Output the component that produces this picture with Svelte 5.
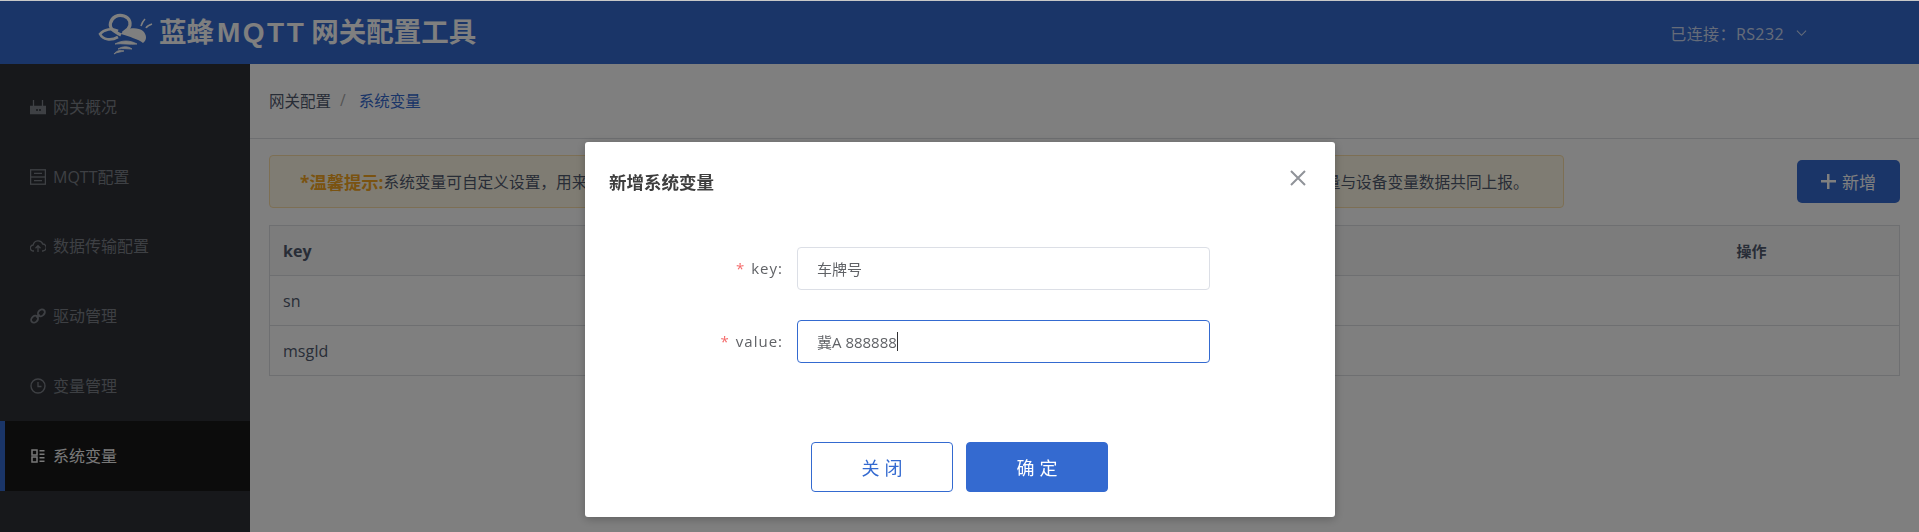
<script>
	let form = $state({ key: '车牌号', value: '冀A 888888' });

	const menu = [
		{ label: '网关概况', icon: 'router' },
		{ label: 'MQTT配置', icon: 'server' },
		{ label: '数据传输配置', icon: 'cloud' },
		{ label: '驱动管理', icon: 'link' },
		{ label: '变量管理', icon: 'clock' },
		{ label: '系统变量', icon: 'list', active: true }
	];

	const rows = ['sn', 'msgId'];
</script>

<div class="page">
	<header class="topbar">
		<div class="brand">
			<svg class="logo" viewBox="0 0 60 50" fill="none">
				<path d="M25 25C19 22 13 19 14.500 13 16 7 22 4 28 6 34 8 36 14 32 19L27 23" stroke="#fff" stroke-width="3.200" />
				<path d="M22 21C16 18 8 19 4 24 7 30 15 31 22 27" stroke="#fff" stroke-width="2.600" />
				<path d="M25 24C30 17 42 17 47 21 51 25 51 30 47 33 42 29 34 27 25 24z" fill="#fff" />
				<path d="M19 34C26 30 34 30 41 34 34 35 26 33 19 34zM22 39C27 36 32 36 36 39 31 39 27 38 22 39zM18 44C21 40 25 40 28 41 25 42 21 42 18 44z" fill="#fff" stroke="#fff" stroke-width=".8" />
				<path d="M45 16C46 13 47 11 49 9M50 18C51 16 53 15 56 14" stroke="#fff" stroke-width="1.600" />
			</svg>
			<span class="brand-name">蓝蜂<b>MQTT</b>网关配置工具</span>
		</div>
		<div class="connect">
			已连接：RS232
			<svg viewBox="0 0 12 8" fill="none"><path d="M1 1.500l5 5 5-5" stroke="currentColor" stroke-width="1.100" /></svg>
		</div>
	</header>

	<div class="body">
		<nav class="sidebar">
			{#each menu as item}
				<div class="menu-item" class:active={item.active}>
					<svg class="menu-icon" viewBox="0 0 16 16" fill="none" stroke="currentColor" stroke-width="1.300">
						{#if item.icon === 'router'}
							<path d="M3.500 1v6M12.500 1v6" />
							<path d="M.5 7.500h15v7H.5z" fill="currentColor" />
							<path d="M6 11h6" stroke="#2e3036" stroke-dasharray="2 1" />
						{:else if item.icon === 'server'}
							<rect x=".6" y=".8" width="14.800" height="14.400" />
							<path d="M.6 8h14.800" />
							<path d="M4 4.400h8M4 11.600h8" />
						{:else if item.icon === 'cloud'}
							<path d="M4 13H3.500a3 3 0 0 1-.3-6A5 5 0 0 1 12.800 6a3.400 3.400 0 0 1-.3 7H12" />
							<path d="M8 14V8M5.500 10.200L8 7.700l2.500 2.500" />
						{:else if item.icon === 'link'}
							<ellipse cx="4.600" cy="11.200" rx="3.800" ry="3" transform="rotate(-45 4.600 11.200)" stroke-width="1.900" />
							<ellipse cx="11.400" cy="4.800" rx="3.800" ry="3" transform="rotate(-45 11.400 4.800)" stroke-width="1.900" />
							<path d="M6.500 9.500l3-3" stroke-width="1.900" />
						{:else if item.icon === 'clock'}
							<circle cx="8" cy="8" r="7" stroke-width="1.400" />
							<path d="M8 4v4.500h3.500" />
						{:else}
							<rect x="2" y="2" width="5" height="5" stroke-width="1.500" />
							<rect x="2" y="9" width="5" height="5" stroke-width="1.500" />
							<path d="M9.500 2.700h5M9.500 6.200h5M9.500 9.700h5M9.500 13.300h5" stroke-width="1.500" />
						{/if}
					</svg>
					<span>{item.label}</span>
				</div>
			{/each}
		</nav>

		<main class="content">
			<div class="breadcrumb">
				<span>网关配置</span>
				<i>/</i>
				<span class="current">系统变量</span>
			</div>

			<div class="panel">
				<div class="toolbar">
					<div class="tip">
						<strong>*温馨提示:</strong>系统变量可自定义设置，用来存放设备编号、网关序列号、车牌号码等固定信息，可在数据传输配置的模板中引用，在数据上报时系统变量与设备变量数据共同上报。
					</div>
					<button class="add"><span class="plus"></span>新增</button>
				</div>

				<table>
					<thead>
						<tr>
							<th>key</th>
							<th class="ops">操作</th>
						</tr>
					</thead>
					<tbody>
						{#each rows as row}
							<tr>
								<td>{row}</td>
								<td></td>
							</tr>
						{/each}
					</tbody>
				</table>
			</div>
		</main>
	</div>
</div>

<div class="mask">
	<div class="dialog" role="dialog">
		<div class="dialog-head">
			<h3>新增系统变量</h3>
			<svg class="close" viewBox="0 0 16 16" fill="none">
				<path d="M1 1l14 14M15 1L1 15" stroke="#909399" stroke-width="2" />
			</svg>
		</div>

		<div class="form">
			<div class="form-row">
				<label for="f-key"><em>*</em>key:</label>
				<input id="f-key" bind:value={form.key} />
			</div>
			<div class="form-row">
				<label for="f-value"><em>*</em>value:</label>
				<div class="input focus">{form.value}<span class="caret"></span></div>
			</div>
		</div>

		<div class="dialog-foot">
			<button class="btn ghost">关闭</button>
			<button class="btn primary">确定</button>
		</div>
	</div>
</div>

<style>
	:global(body) {
		margin: 0;
		background: #c8c8c8;
		font-family: 'Open Sans', 'Noto Sans CJK SC', sans-serif;
	}

	.page {
		height: 532px;
		overflow: hidden;
		box-sizing: border-box;
		padding-top: 1px;
		display: flex;
		flex-direction: column;
	}

	.topbar {
		height: 63px;
		flex: none;
		background: #346ad0;
		display: flex;
		align-items: center;
		justify-content: space-between;
		padding: 0 112px 0 96px;
	}

	.brand {
		display: flex;
		align-items: center;
		gap: 3px;
		color: #fff;
	}

	.logo {
		width: 60px;
		height: 50px;
		margin-top: 5px;
	}

	.brand-name {
		font-size: 27.5px;
		font-weight: 700;
		line-height: 40px;
		white-space: nowrap;
	}

	.brand-name b {
		font-size: 28px;
		letter-spacing: 2.5px;
		margin: 0 5px 0 3px;
		font-family: 'Liberation Sans', sans-serif;
	}

	.connect {
		color: rgba(255, 255, 255, 0.75);
		font-size: 16px;
		letter-spacing: 0.4px;
		display: flex;
		align-items: center;
		gap: 12px;
	}

	.connect svg {
		width: 11px;
		height: 8px;
	}

	.body {
		flex: 1;
		display: flex;
		min-height: 0;
	}

	.sidebar {
		width: 250px;
		flex: none;
		background: #2e3036;
		padding-top: 8px;
		box-sizing: border-box;
	}

	.menu-item {
		height: 69.8px;
		display: flex;
		align-items: center;
		gap: 7px;
		padding-left: 30px;
		font-size: 16px;
		color: #7c8088;
		box-sizing: border-box;
	}

	.menu-item span {
		margin-top: -2px;
	}

	.menu-item.active {
		background: #181818;
		color: #f2f2f2;
		border-left: 5px solid #346ad0;
		padding-left: 25px;
	}

	.menu-icon {
		width: 16px;
		height: 16px;
		flex: none;
	}

	.content {
		flex: 1;
		min-width: 0;
		background: #fff;
	}

	.breadcrumb {
		height: 75px;
		box-sizing: border-box;
		padding: 0 0 2px 19px;
		border-bottom: 1px solid #dcdee2;
		display: flex;
		align-items: center;
		font-size: 15.5px;
		color: #515a6e;
	}

	.breadcrumb i {
		font-style: normal;
		color: #a8a8a8;
		margin: 0 13px 0 9px;
	}

	.breadcrumb .current {
		color: #346ad0;
	}

	.panel {
		padding: 16px 19px 0;
	}

	.toolbar {
		height: 53px;
		display: flex;
		justify-content: space-between;
		align-items: center;
		margin-bottom: 17px;
	}

	.tip {
		width: 1295px;
		height: 53px;
		box-sizing: border-box;
		background: #fff9e6;
		border: 1px solid #fadfa8;
		border-radius: 4px;
		padding-left: 30px;
		display: flex;
		align-items: center;
		font-size: 15.7px;
		color: #515a6e;
		white-space: nowrap;
		overflow: hidden;
	}

	.tip strong {
		color: #f5a623;
		font-size: 17.3px;
		font-weight: 700;
	}

	.add {
		width: 103px;
		height: 43px;
		border: 0;
		border-radius: 5px;
		background: #346ad0;
		color: #fff;
		font: inherit;
		font-size: 17px;
		display: flex;
		align-items: center;
		justify-content: center;
		gap: 6px;
	}

	.plus {
		width: 15px;
		height: 15px;
		background:
			linear-gradient(#fff, #fff) center / 100% 2.5px no-repeat,
			linear-gradient(#fff, #fff) center / 2.5px 100% no-repeat;
	}

	table {
		width: 100%;
		border-collapse: collapse;
		table-layout: fixed;
		color: #515a6e;
		font-size: 16px;
	}

	th,
	td {
		height: 50px;
		padding: 0 13px;
		box-sizing: border-box;
		border-top: 1px solid #dcdee2;
		border-bottom: 1px solid #dcdee2;
		text-align: left;
	}

	th:first-child,
	td:first-child {
		border-left: 1px solid #dcdee2;
	}

	th:last-child,
	td:last-child {
		border-right: 1px solid #dcdee2;
	}

	th {
		background: #f8f8f9;
		font-weight: 700;
	}

	th.ops {
		width: 176px;
		font-size: 15px;
	}

	.mask {
		position: fixed;
		left: 0;
		right: 0;
		top: 1px;
		bottom: 0;
		background: rgba(0, 0, 0, 0.5);
	}

	.dialog {
		position: absolute;
		left: 585px;
		top: 141px;
		width: 750px;
		height: 375px;
		background: #fff;
		border-radius: 3px;
		box-shadow: 0 2px 10px rgba(0, 0, 0, 0.25);
		display: flex;
		flex-direction: column;
	}

	.dialog-head {
		height: 104px;
		flex: none;
		display: flex;
		justify-content: space-between;
		padding: 28px 29px 0 24px;
		box-sizing: border-box;
	}

	.dialog-head h3 {
		margin: 0;
		font-size: 17.5px;
		font-weight: 700;
		line-height: 24px;
		color: #3e3e3e;
	}

	.close {
		width: 16px;
		height: 16px;
	}

	.form {
		flex: 1;
		display: flex;
		flex-direction: column;
		gap: 29px;
	}

	.form-row {
		display: flex;
		align-items: center;
		height: 44px;
	}

	label {
		width: 212px;
		text-align: right;
		padding-right: 14px;
		box-sizing: border-box;
		font-size: 15px;
		letter-spacing: 1px;
		color: #606266;
	}

	label em {
		font-style: normal;
		color: #f56c6c;
		margin-right: 6px;
	}

	input,
	.input {
		width: 413px;
		height: 43px;
		box-sizing: border-box;
		border: 1px solid #dcdfe6;
		border-radius: 4px;
		padding: 0 19px;
		font: inherit;
		font-size: 15px;
		color: #606266;
		outline: none;
		display: flex;
		align-items: center;
		white-space: pre;
	}

	.input.focus {
		border-color: #346ad0;
	}

	.caret {
		width: 1px;
		height: 19px;
		background: #303133;
	}

	.dialog-foot {
		display: flex;
		justify-content: center;
		gap: 13px;
		padding: 0 1px 25px 0;
	}

	.btn {
		width: 142px;
		height: 50px;
		border-radius: 4px;
		font: inherit;
		font-size: 18px;
		letter-spacing: 5px;
		text-indent: 5px;
		border: 1px solid #346ad0;
	}

	.ghost {
		background: #fff;
		color: #346ad0;
	}

	.primary {
		background: #346ad0;
		color: #fff;
	}
</style>
